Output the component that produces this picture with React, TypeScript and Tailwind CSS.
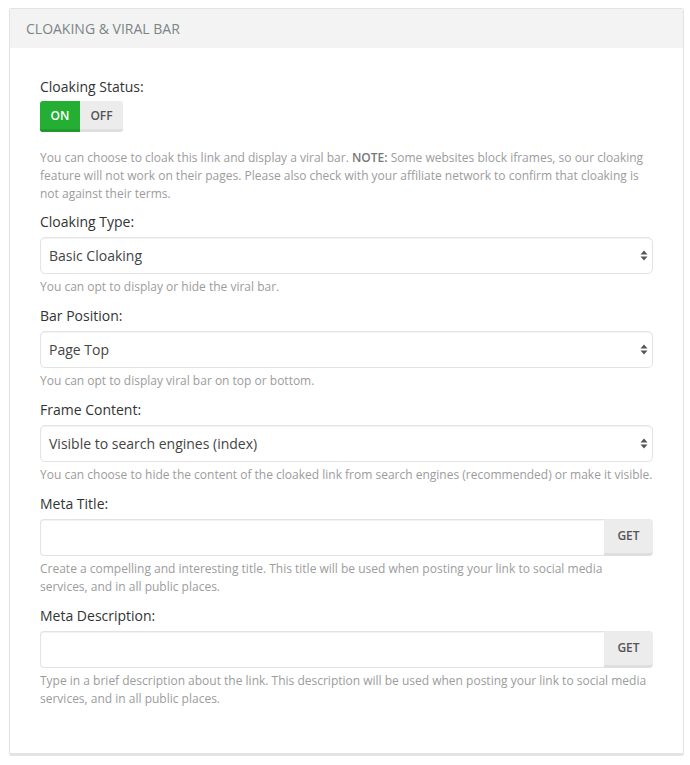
import React from 'react';

const Help = ({ children, className = 'mt-[5px]' }: { children: React.ReactNode; className?: string }) => (
  <p className={`${className} text-[12px] leading-[18px] text-[#9c9c9c]`}>{children}</p>
);

const Label = ({ children, className = 'mb-[5px]' }: { children: React.ReactNode; className?: string }) => (
  <label className={`${className} block text-[14px] leading-[20px] text-[#333]`}>{children}</label>
);

const Select = ({ value }: { value: string }) => (
  <div className="relative h-[37px] rounded-[5px] border border-[#e3e3e3] bg-white shadow-[inset_0_1px_1px_rgba(0,0,0,0.05)] flex items-center px-[8px] text-[14px] text-[#444]">
    <span>{value}</span>
    <svg className="absolute right-[4px] top-[12px]" width="8" height="11" viewBox="0 0 8 11">
      <path d="M4 0.5 L7.5 4.5 H0.5 Z" fill="#555" />
      <path d="M4 10.5 L7.5 6.5 H0.5 Z" fill="#555" />
    </svg>
  </div>
);

const InputGet = () => (
  <div className="flex h-[37px]">
    <div className="flex-1 rounded-l-[4px] border border-[#e3e3e3] border-r-0 bg-white shadow-[inset_0_1px_1px_rgba(0,0,0,0.05)]" />
    <button className="w-[49px] rounded-r-[4px] bg-[#ececec] border-b-[3px] border-[#dedede] text-[12px] font-semibold text-[#555]">
      GET
    </button>
  </div>
);

export default function App() {
  return (
    <div className="min-h-screen bg-white pt-[8px] pl-[9px] pr-[6px] font-['Open_Sans',sans-serif]">
      <div className="rounded-[3px] border border-[#e2e2e2] border-b-[3px] border-b-[#e4e4e4] bg-white">
        <div className="h-[39px] bg-[#f3f3f3] px-[16px] flex items-center text-[14px] text-[#7b8585] uppercase">
          Cloaking &amp; Viral Bar
        </div>
        <div className="px-[30px] pt-[29px] pb-[45px]">
          <Label className="mb-[4px]">Cloaking Status:</Label>
          <div className="flex">
            <div className="flex h-[31px] rounded-[3px] overflow-hidden text-[12px] font-semibold">
              <span className="w-[40px] flex items-center justify-center bg-[#24ae34] border-b-[3px] border-[#1f9a2c] text-white pt-[1px]">ON</span>
              <span className="w-[43px] flex items-center justify-center bg-[#ececec] border-b-[3px] border-[#dedede] text-[#555] pt-[1px]">OFF</span>
            </div>
          </div>
          <Help className="mt-[17px]">
            You can choose to cloak this link and display a viral bar. <b className="font-semibold text-[#777]">NOTE:</b> Some websites block iframes, so our cloaking feature will not work on their pages. Please also check with your affiliate network to confirm that cloaking is not against their terms.
          </Help>

          <div className="mt-[9px]">
            <Label>Cloaking Type:</Label>
            <Select value="Basic Cloaking" />
            <Help className="mt-[4px]">You can opt to display or hide the viral bar.</Help>
          </div>

          <div className="mt-[10px]">
            <Label>Bar Position:</Label>
            <Select value="Page Top" />
            <Help className="mt-[4px]">You can opt to display viral bar on top or bottom.</Help>
          </div>

          <div className="mt-[10px]">
            <Label>Frame Content:</Label>
            <Select value="Visible to search engines (index)" />
            <Help className="mt-[4px]">You can choose to hide the content of the cloaked link from search engines (recommended) or make it visible.</Help>
          </div>

          <div className="mt-[10px]">
            <Label>Meta Title:</Label>
            <InputGet />
            <Help className="mt-[4px]">Create a compelling and interesting title. This title will be used when posting your link to social media services, and in all public places.</Help>
          </div>

          <div className="mt-[10px]">
            <Label>Meta Description:</Label>
            <InputGet />
            <Help className="mt-[4px]">Type in a brief description about the link. This description will be used when posting your link to social media services, and in all public places.</Help>
          </div>
        </div>
      </div>
    </div>
  );
}
